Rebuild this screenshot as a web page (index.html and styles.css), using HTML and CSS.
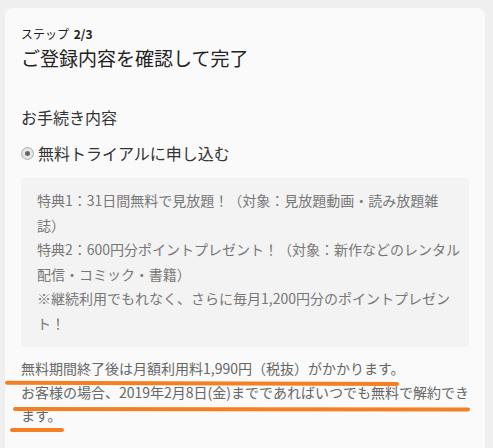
FILE: index.html
```html
<!DOCTYPE html>
<html lang="ja">
<head>
<meta charset="utf-8">
<link rel="stylesheet" href="styles.css">
</head>
<body>
<div class="card">
  <div class="step">ステップ <b>2/3</b></div>
  <h1 class="title">ご登録内容を確認して完了</h1>
  <h2 class="section">お手続き内容</h2>
  <label class="option"><span class="radio"><span class="dot"></span></span>無料トライアルに申し込む</label>
  <div class="benefits">
    <p>特典1：31日間無料で見放題！（対象：見放題動画・読み放題雑誌）</p>
    <p>特典2：600円分ポイントプレゼント！（対象：新作などのレンタル配信・コミック・書籍）</p>
    <p>※継続利用でもれなく、さらに毎月1,200円分のポイントプレゼント！</p>
  </div>
  <p class="notice">無料期間終了後は月額利用料1,990円（税抜）がかかります。<br>お客様の場合、2019年2月8日(金)までであればいつでも無料で解約できます。</p>
</div>
<svg class="marks" width="493" height="448" viewBox="0 0 493 448" aria-hidden="true">
  <path d="M7 382.8 L397 384" />
  <path d="M15 409 L468 409.5" />
  <path d="M12 430 L62 430" />
</svg>
</body>
</html>
```
FILE: styles.css
```css
html, body {
  margin: 0;
  padding: 0;
}
body {
  background: #efefef;
  font-family: "Noto Sans CJK JP", "Noto Sans", sans-serif;
  color: #333;
  width: 493px;
  height: 448px;
  overflow: hidden;
  position: relative;
  text-spacing-trim: space-all;
}
.card {
  margin: 8px 8px 0 5px;
  background: #fafafa;
  border-radius: 8px 8px 0 0;
  padding: 17px 16px 40px 16px;
  min-height: 460px;
  box-sizing: border-box;
}
.step {
  font-size: 12px;
  line-height: 18px;
  color: #222;
}
.step b {
  font-weight: bold;
  margin-left: 2px;
}
.title {
  margin: 2px 0 0;
  font-size: 19px;
  font-weight: normal;
  line-height: 26px;
  color: #222;
}
.section {
  margin: 34px 0 0;
  font-size: 16px;
  font-weight: normal;
  line-height: 24px;
  color: #333;
}
.option {
  display: flex;
  align-items: center;
  gap: 4px;
  margin-top: 12px;
  font-size: 16px;
  line-height: 24px;
  color: #333;
}
.radio {
  width: 11px;
  height: 11px;
  border: 1px solid #b0b0b0;
  border-radius: 50%;
  background: radial-gradient(circle, #e8e8e8 50%, #cfcfcf 100%);
  display: flex;
  align-items: center;
  justify-content: center;
}
.dot {
  width: 5px;
  height: 5px;
  border-radius: 50%;
  background: #666;
}
.benefits {
  margin-top: 13px;
  background: #f3f3f3;
  border-radius: 4px;
  padding: 10px 8px 12px 16px;
  font-size: 14px;
  line-height: 24.5px;
  color: #777;
}
.benefits p {
  margin: 0;
}
.notice {
  margin: 10px 0 0;
  font-size: 14px;
  line-height: 23.5px;
  color: #666;
}
.marks {
  position: absolute;
  left: 0;
  top: 0;
  pointer-events: none;
}
.marks path {
  stroke: #f58024;
  stroke-width: 4;
  stroke-linecap: round;
  fill: none;
}
```
